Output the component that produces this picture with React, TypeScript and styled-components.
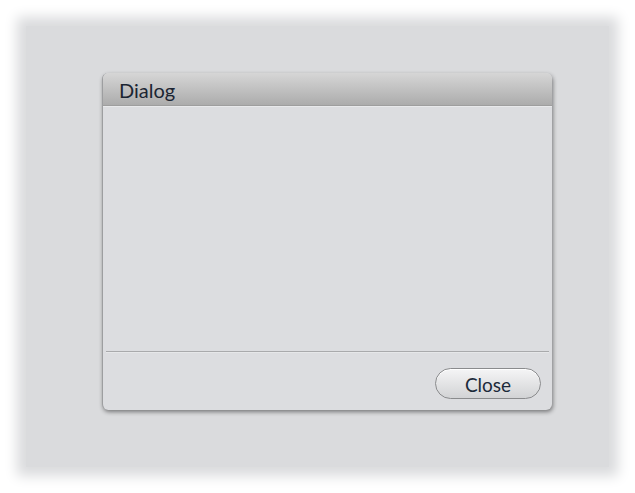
import React from 'react'
import styled, { createGlobalStyle } from 'styled-components'

const GlobalStyle = createGlobalStyle`
  html, body {
    margin: 0;
    padding: 0;
    background: #ffffff;
  }
  body {
    font-family: Lato, "Open Sans", "Liberation Sans", sans-serif;
  }
`

const Stage = styled.div`
  width: 635px;
  height: 493px;
  padding: 26px;
  box-sizing: border-box;
  overflow: hidden;
`

const Backdrop = styled.div`
  width: 100%;
  height: 100%;
  box-sizing: border-box;
  background: #dadbdd;
  box-shadow: 0 0 12px 9px #dadbdd;
  padding: 47px 0 0 76px;
`

const Dialog = styled.div`
  width: 450px;
  height: 337px;
  display: flex;
  flex-direction: column;
  background: #dcdde0;
  border-radius: 6px;
  border-left: 1px solid #9d9ea0;
  box-sizing: border-box;
  box-shadow: 1px 2px 4px rgba(0, 0, 0, 0.45);
  overflow: hidden;
`

const TitleBar = styled.div`
  height: 33px;
  flex: none;
  display: flex;
  align-items: center;
  padding-left: 16px;
  background: linear-gradient(#d6d6d6, #acacac);
  border-bottom: 1px solid #9e9e9e;
  box-sizing: border-box;
`

const Title = styled.span`
  font-size: 20px;
  color: #1b2533;
  padding-top: 2px;
`

const Body = styled.div`
  flex: 1;
  border-top: 1px solid #e8e9eb;
`

const Separator = styled.div`
  height: 1px;
  margin: 0 3px;
  background: #a9aaac;
  border-bottom: 1px solid #e6e7e9;
`

const Footer = styled.div`
  height: 57px;
  flex: none;
  display: flex;
  justify-content: flex-end;
  align-items: flex-start;
  padding: 15px 11px 0 0;
  box-sizing: border-box;
`

const Button = styled.button`
  width: 106px;
  height: 31px;
  border-radius: 16px;
  border: 1px solid #8a8b8d;
  background: linear-gradient(#f5f5f6, #d2d3d5);
  font-family: Lato, "Open Sans", "Liberation Sans", sans-serif;
  font-size: 19px;
  color: #1c2a3a;
  padding: 0;
  padding-top: 1px;
  box-shadow: inset 0 1px 0 #ffffff;
`

export default function App() {
  return (
    <Stage>
      <GlobalStyle />
      <Backdrop>
        <Dialog>
          <TitleBar>
            <Title>Dialog</Title>
          </TitleBar>
          <Body />
          <Separator />
          <Footer>
            <Button>Close</Button>
          </Footer>
        </Dialog>
      </Backdrop>
    </Stage>
  )
}
